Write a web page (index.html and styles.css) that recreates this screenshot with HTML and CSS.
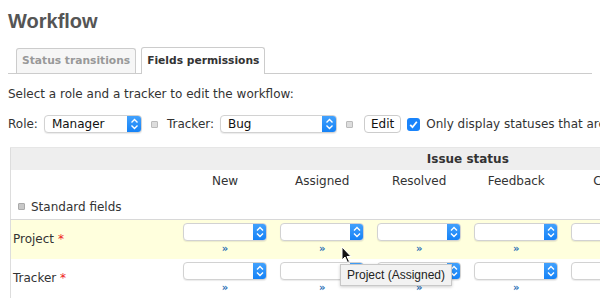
FILE: index.html
```html
<!DOCTYPE html>
<html lang="en">
  <head>
    <meta charset="UTF-8" />
    <title>Workflow</title>
    <link rel="stylesheet" href="styles.css">
  </head>
  <body>
    <h2>Workflow</h2>

    <ul class="tabs">
      <li class="tab">Status transitions</li>
      <li class="tab selected">Fields permissions</li>
    </ul>

    <p class="intro">Select a role and a tracker to edit the workflow:</p>

    <div class="filters">
      <label>Role:</label>
      <span class="select role-select">
        <span class="select-value">Manager</span>
        <span class="stepper"><svg width="15" height="18" viewBox="0 0 15 18"><path d="M4.5 7.5 L7.5 4.5 L10.5 7.5 M4.5 10.5 L7.5 13.5 L10.5 10.5" fill="none" stroke="#fff" stroke-width="1.4"/></svg></span>
      </span>
      <span class="toggle plus"></span>
      <label>Tracker:</label>
      <span class="select tracker-select">
        <span class="select-value">Bug</span>
        <span class="stepper"><svg width="15" height="18" viewBox="0 0 15 18"><path d="M4.5 7.5 L7.5 4.5 L10.5 7.5 M4.5 10.5 L7.5 13.5 L10.5 10.5" fill="none" stroke="#fff" stroke-width="1.4"/></svg></span>
      </span>
      <span class="toggle plus"></span>
      <button class="edit-button">Edit</button>
      <span class="checkbox"><svg width="13" height="13" viewBox="0 0 13 13"><path d="M3.2 6.8 L5.5 9.2 L9.8 3.8" fill="none" stroke="#fff" stroke-width="1.8"/></svg></span>
      <span class="only-used">Only display statuses that are used by this tracker</span>
    </div>

    <table class="workflow">
      <colgroup>
        <col class="col-field">
        <col class="col-status"><col class="col-status"><col class="col-status">
        <col class="col-status"><col class="col-status"><col class="col-status">
      </colgroup>
      <thead>
        <tr class="header-row">
          <th></th>
          <th colspan="6">Issue status</th>
        </tr>
        <tr class="status-row">
          <td></td>
          <td>New</td>
          <td>Assigned</td>
          <td>Resolved</td>
          <td>Feedback</td>
          <td>Closed</td>
          <td>Rejected</td>
        </tr>
        <tr class="group-row">
          <td colspan="7"><span class="toggle minus"></span>Standard fields</td>
        </tr>
      </thead>
      <tbody>
        <tr class="field-row hover">
          <td class="field-name">Project <span class="required">*</span></td>
          <td><span class="select small"><span class="select-value"></span><span class="stepper"><svg width="14" height="18" viewBox="0 0 14 18"><path d="M4 7.5 L7 4.5 L10 7.5 M4 10.5 L7 13.5 L10 10.5" fill="none" stroke="#fff" stroke-width="1.4"/></svg></span></span><a class="copy">»</a></td>
          <td><span class="select small"><span class="select-value"></span><span class="stepper"><svg width="14" height="18" viewBox="0 0 14 18"><path d="M4 7.5 L7 4.5 L10 7.5 M4 10.5 L7 13.5 L10 10.5" fill="none" stroke="#fff" stroke-width="1.4"/></svg></span></span><a class="copy">»</a></td>
          <td><span class="select small"><span class="select-value"></span><span class="stepper"><svg width="14" height="18" viewBox="0 0 14 18"><path d="M4 7.5 L7 4.5 L10 7.5 M4 10.5 L7 13.5 L10 10.5" fill="none" stroke="#fff" stroke-width="1.4"/></svg></span></span><a class="copy">»</a></td>
          <td><span class="select small"><span class="select-value"></span><span class="stepper"><svg width="14" height="18" viewBox="0 0 14 18"><path d="M4 7.5 L7 4.5 L10 7.5 M4 10.5 L7 13.5 L10 10.5" fill="none" stroke="#fff" stroke-width="1.4"/></svg></span></span><a class="copy">»</a></td>
          <td><span class="select small"><span class="select-value"></span><span class="stepper"><svg width="14" height="18" viewBox="0 0 14 18"><path d="M4 7.5 L7 4.5 L10 7.5 M4 10.5 L7 13.5 L10 10.5" fill="none" stroke="#fff" stroke-width="1.4"/></svg></span></span><a class="copy">»</a></td>
          <td><span class="select small"><span class="select-value"></span><span class="stepper"><svg width="14" height="18" viewBox="0 0 14 18"><path d="M4 7.5 L7 4.5 L10 7.5 M4 10.5 L7 13.5 L10 10.5" fill="none" stroke="#fff" stroke-width="1.4"/></svg></span></span><a class="copy">»</a></td>
        </tr>
        <tr class="field-row">
          <td class="field-name">Tracker <span class="required">*</span></td>
          <td><span class="select small"><span class="select-value"></span><span class="stepper"><svg width="14" height="18" viewBox="0 0 14 18"><path d="M4 7.5 L7 4.5 L10 7.5 M4 10.5 L7 13.5 L10 10.5" fill="none" stroke="#fff" stroke-width="1.4"/></svg></span></span><a class="copy">»</a></td>
          <td><span class="select small"><span class="select-value"></span><span class="stepper"><svg width="14" height="18" viewBox="0 0 14 18"><path d="M4 7.5 L7 4.5 L10 7.5 M4 10.5 L7 13.5 L10 10.5" fill="none" stroke="#fff" stroke-width="1.4"/></svg></span></span><a class="copy">»</a></td>
          <td><span class="select small"><span class="select-value"></span><span class="stepper"><svg width="14" height="18" viewBox="0 0 14 18"><path d="M4 7.5 L7 4.5 L10 7.5 M4 10.5 L7 13.5 L10 10.5" fill="none" stroke="#fff" stroke-width="1.4"/></svg></span></span><a class="copy">»</a></td>
          <td><span class="select small"><span class="select-value"></span><span class="stepper"><svg width="14" height="18" viewBox="0 0 14 18"><path d="M4 7.5 L7 4.5 L10 7.5 M4 10.5 L7 13.5 L10 10.5" fill="none" stroke="#fff" stroke-width="1.4"/></svg></span></span><a class="copy">»</a></td>
          <td><span class="select small"><span class="select-value"></span><span class="stepper"><svg width="14" height="18" viewBox="0 0 14 18"><path d="M4 7.5 L7 4.5 L10 7.5 M4 10.5 L7 13.5 L10 10.5" fill="none" stroke="#fff" stroke-width="1.4"/></svg></span></span><a class="copy">»</a></td>
          <td><span class="select small"><span class="select-value"></span><span class="stepper"><svg width="14" height="18" viewBox="0 0 14 18"><path d="M4 7.5 L7 4.5 L10 7.5 M4 10.5 L7 13.5 L10 10.5" fill="none" stroke="#fff" stroke-width="1.4"/></svg></span></span><a class="copy">»</a></td>
        </tr>
      </tbody>
    </table>

    <svg class="cursor" width="12" height="18" viewBox="0 0 12 18"><path d="M1 1 L1 14 L4 11 L6.5 16.5 L8.5 15.5 L6 10.5 L10 10.5 Z" fill="#111" stroke="#fff" stroke-width="1"/></svg>
    <div class="tooltip">Project (Assigned)</div>
  </body>
</html>
```

FILE: styles.css
```css
html {
  overflow: hidden;
}

body {
  font-family: 'DejaVu Sans', Verdana, sans-serif;
  font-size: 12px;
  color: #333;
  margin: 0;
  padding: 8px;
  background: #fff;
  position: relative;
}

h2 {
  font-family: 'Liberation Sans', Arial, sans-serif;
  font-size: 20px;
  font-weight: 700;
  color: #555;
  margin: 0;
  line-height: 24px;
  padding-top: 1px;
}

.tabs {
  list-style: none;
  display: flex;
  align-items: flex-end;
  gap: 5px;
  margin: 15px 0 0 0;
  padding: 0 0 0 8px;
  border-bottom: 1px solid #ccc;
  height: 25px;
}

.tab {
  font-size: 10.7px;
  font-weight: bold;
  color: #999;
  background: #f6f6f6;
  border: 1px solid #ccc;
  border-bottom: none;
  border-radius: 3px 3px 0 0;
  padding: 0 5px;
  height: 24px;
  line-height: 24px;
}

.tab.selected {
  color: #333;
  background: #fff;
  height: 26px;
  line-height: 26px;
  margin-bottom: -1px;
}

.intro {
  margin: 12px 0 0 0;
  line-height: 16px;
}

.filters {
  display: flex;
  align-items: center;
  margin-top: 12px;
  height: 20px;
  white-space: nowrap;
}

.filters > * {
  flex-shrink: 0;
}

.filters label {
  margin-right: 6px;
}

.select {
  display: inline-flex;
  height: 18px;
  border: 1px solid #d2d2d2;
  border-radius: 4px;
  background: #fff;
  box-sizing: border-box;
  box-shadow: 0 1px 1px rgba(0, 0, 0, 0.08);
  overflow: hidden;
  font-size: 12px;
  color: #111;
}

.select-value {
  flex: 1;
  padding-left: 7px;
  line-height: 17px;
}

.stepper {
  width: 15px;
  background: linear-gradient(#45a3fd, #1280f6);
  display: flex;
  margin: -1px -1px -1px 0;
}

.role-select {
  width: 98px;
}

.tracker-select {
  width: 117px;
}

.toggle {
  display: inline-block;
  width: 7px;
  height: 7px;
  box-sizing: border-box;
  border: 1px solid #bbb;
  background: #ddd;
  border-radius: 1px;
  margin: 0 9px 0 9px;
}

.toggle.minus {
  background: #c8c8c8;
  border-color: #aaa;
  margin: 0 6px 0 0;
  vertical-align: 1px;
}

.edit-button {
  font-family: 'DejaVu Sans', sans-serif;
  font-size: 12px;
  height: 18px;
  padding: 0 6px;
  background: #fff;
  border: 1px solid #ccc;
  border-radius: 4px;
  color: #111;
  margin: 0 6px 0 2px;
}

.checkbox {
  display: inline-flex;
  width: 13px;
  height: 13px;
  background: #1a84fb;
  border-radius: 3px;
  margin-right: 6px;
}

.only-used {
  color: #333;
}

.workflow {
  border-collapse: collapse;
  table-layout: fixed;
  width: 749px;
  margin: 13px 0 0 2px;
  border-left: 1px solid #ddd;
  border-top: 1px solid #e6e6e6;
}

.col-field {
  width: 166px;
}

.col-status {
  width: 97px;
}

.header-row {
  height: 22px;
}

.header-row th {
  background: #eee;
  padding: 0;
  font-weight: bold;
  text-align: center;
  color: #333;
}

.status-row {
  height: 24px;
}

.status-row td {
  text-align: center;
  padding: 0;
  vertical-align: top;
  line-height: 22px;
  color: #333;
}

.group-row {
  height: 26px;
}

.group-row td {
  padding: 2px 0 0 7px;
  vertical-align: middle;
  border-bottom: 1px solid #d8d8d8;
}

.field-row {
  height: 39px;
}

.field-row td {
  padding: 3px 0 0 0;
  vertical-align: top;
  text-align: center;
}

.field-row.hover td {
  background: #ffffdd;
}

.field-row td.field-name {
  text-align: left;
  vertical-align: middle;
  padding: 0 0 0 2px;
}

.required {
  color: #e22;
}

.select.small {
  width: 84px;
  display: flex;
  margin: 0 auto;
}

.select.small .stepper {
  width: 14px;
}

.copy {
  display: block;
  color: #2a6fb5;
  font-size: 10px;
  font-weight: bold;
  line-height: 12px;
  margin-top: 2px;
}

.cursor {
  position: absolute;
  left: 341px;
  top: 246px;
}

.tooltip {
  position: absolute;
  left: 340px;
  top: 264px;
  height: 20px;
  line-height: 20px;
  padding: 0 6px;
  background: #f2f2f2;
  border: 1px solid #c8c8c8;
  box-shadow: 0 1px 3px rgba(0, 0, 0, 0.2);
  font-family: 'Liberation Sans', Arial, sans-serif;
  font-size: 12px;
  color: #222;
  white-space: nowrap;
}
```
